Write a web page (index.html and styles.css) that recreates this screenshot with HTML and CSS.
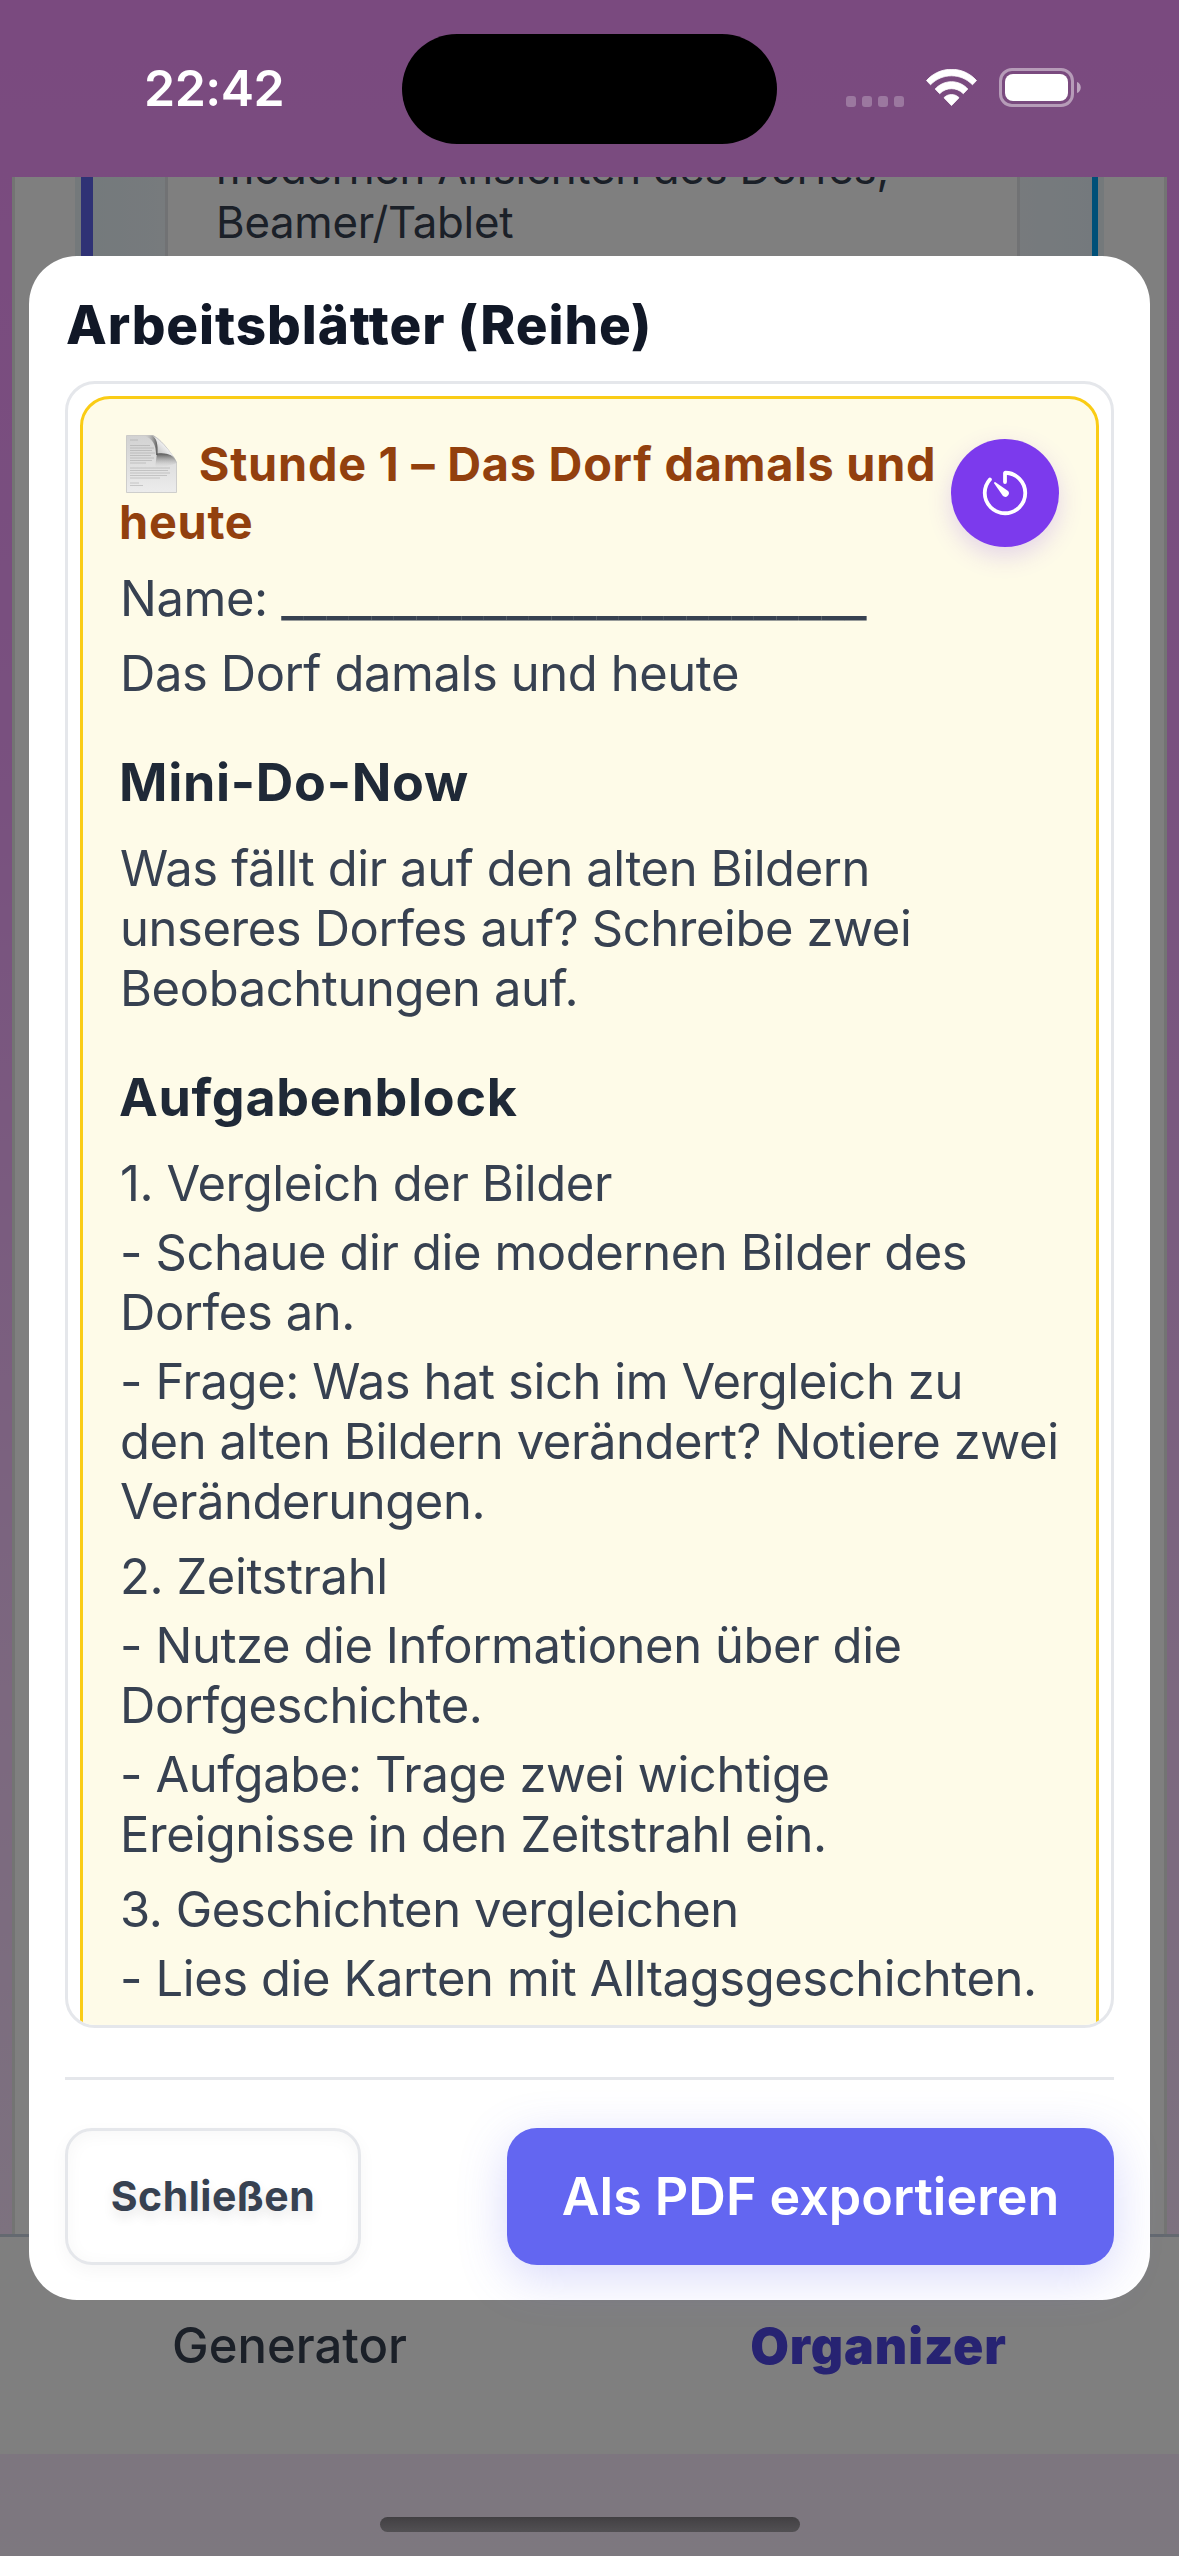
FILE: index.html
```html
<!DOCTYPE html>
<html lang="de">
<head>
<meta charset="utf-8">
<title>Arbeitsblätter (Reihe)</title>
<link rel="stylesheet" href="styles.css">
</head>
<body>
<div class="screen">
  <div class="app">
    <div class="status-space"></div>
    <div class="page">
      <div class="lesson">
        <div class="lesson-card">
          <p class="lesson-text">modernen Ansichten des Dorfes,<br>Beamer/Tablet</p>
        </div>
      </div>
    </div>
    <nav class="tabs">
      <a class="tab">Generator</a>
      <a class="tab tab-active">Organizer</a>
    </nav>
    <div class="home-space"></div>
  </div>

  <div class="overlay">
    <section class="dialog">
      <h1 class="dialog-title">Arbeitsblätter (Reihe)</h1>
      <div class="scroller">
        <article class="sheet">
          <header class="sheet-head">
            <h2 class="sheet-title"><svg class="page-icon" viewBox="0 0 66 58">
              <defs>
                <linearGradient id="paper" x1="0" y1="0" x2="0" y2="1"><stop offset="0" stop-color="#d2d2d2"/><stop offset="1" stop-color="#ececec"/></linearGradient>
                <linearGradient id="fold" x1="0" y1="1" x2="1" y2="0"><stop offset="0.2" stop-color="#b9b9b9"/><stop offset="0.6" stop-color="#f4f4f4"/></linearGradient>
                <linearGradient id="shadeV" x1="0" y1="0" x2="0" y2="1"><stop offset="0" stop-color="#4c4c4c"/><stop offset="1" stop-color="#d8d8d8" stop-opacity="0"/></linearGradient>
                <linearGradient id="shadeH" x1="1" y1="0" x2="0" y2="0"><stop offset="0" stop-color="#4c4c4c"/><stop offset="1" stop-color="#d8d8d8" stop-opacity="0"/></linearGradient>
              </defs>
              <path d="M7.500 0.500H34C40 3 50 14 57.500 27V57.500H7.500z" fill="url(#paper)" stroke="#c4c4c4" stroke-width="0.800"/>
              <path d="M24 0.500H34C38 3 40 9 39 20H37C37 10 34 3 24 0.500z" fill="url(#shadeH)"/>
              <path d="M38 18C48 17 56 19 57.500 28C52 31 43 31 36 33z" fill="url(#shadeV)"/>
              <path d="M33 0.500C38 3 39 10 38.500 18.500C48 17.500 55 20 57.500 27C57 23 41 4 33 0.500z" fill="url(#fold)"/>
              <path d="M11 5h8M11 10.500h20M11 13h24M11 15.500h22M11 18h25M11 20.500h21M11 23h24M11 25.500h22M11 28h16M11 33h40M11 35.500h38M11 38h40M11 40.500h37M11 43h30M11 48h9M11 50.500h13" stroke="#9c9c9c" stroke-width="0.900" opacity="0.500"/>
            </svg> Stunde 1 – Das Dorf damals und heute</h2>
            <button class="timer" aria-label="Timer">
              <svg class="timer-icon" viewBox="0 0 512 512">
                <path d="M112.910 128A191.850 191.850 0 0 0 64 254c-1.180 106.350 85.650 193.800 192 194 106.200.200 192-85.830 192-192 0-104.540-83.550-189.610-187.500-192a4.360 4.360 0 0 0-4.500 4.370V152" fill="none" stroke="#fff" stroke-width="36" stroke-linecap="round" stroke-linejoin="round"/>
                <path d="M233.380 278.630l-79-113a8.130 8.130 0 0 1 11.320-11.320l113 79a32.500 32.500 0 0 1-37.250 53.260 33.210 33.210 0 0 1-8.070-7.940z" fill="#fff"/>
              </svg>
            </button>
          </header>
          <p class="line">Name: <span class="blank">__________________________</span></p>
          <p class="line">Das Dorf damals und heute</p>
          <h3 class="section">Mini-Do-Now</h3>
          <p class="line">Was fällt dir auf den alten Bildern unseres Dorfes auf? Schreibe zwei Beobachtungen auf.</p>
          <h3 class="section">Aufgabenblock</h3>
          <div class="task">
            <p>1. Vergleich der Bilder</p>
            <p>- Schaue dir die modernen Bilder des Dorfes an.</p>
            <p>- Frage: Was hat sich im Vergleich zu<br>den alten Bildern verändert? Notiere zwei Veränderungen.</p>
          </div>
          <div class="task">
            <p>2. Zeitstrahl</p>
            <p>- Nutze die Informationen über die Dorfgeschichte.</p>
            <p>- Aufgabe: Trage zwei wichtige Ereignisse in den Zeitstrahl ein.</p>
          </div>
          <div class="task">
            <p>3. Geschichten vergleichen</p>
            <p>- Lies die Karten mit Alltagsgeschichten.</p>
          </div>
        </article>
      </div>
      <footer class="actions">
        <button class="btn btn-close">Schließen</button>
        <button class="btn btn-export">Als PDF exportieren</button>
      </footer>
    </section>
  </div>

  <div class="status">
    <span class="clock">22:42</span>
    <span class="island"></span>
    <span class="indicators">
      <span class="dots"><i></i><i></i><i></i><i></i></span>
      <svg class="wifi" viewBox="0 0 51 37">
        <path d="M0.500 11.500C14-3.500 37-3.500 50.500 11.500L46.500 15.800C35 3.800 16 3.800 4.500 15.800z" fill="#fff" stroke="#fff" stroke-width="0.800" stroke-linejoin="round"/>
        <path d="M9.200 20C18 10.300 33 10.300 41.800 20L37.300 24.700C31 18 20 18 13.700 24.700z" fill="#fff" stroke="#fff" stroke-width="0.800" stroke-linejoin="round"/>
        <path d="M18 28.800C22 24.400 29 24.400 33 28.800L25.500 36.600z" fill="#fff" stroke="#fff" stroke-width="0.800" stroke-linejoin="round"/>
      </svg>
      <svg class="battery" viewBox="0 0 82 39">
        <rect x="1.500" y="1.500" width="72" height="36" rx="11.500" fill="none" stroke="#fff" stroke-opacity="0.450" stroke-width="3"/>
        <rect x="6" y="6" width="63" height="27" rx="8" fill="#fff"/>
        <path d="M78 14C83 15.500 83 23.500 78 25z" fill="#fff" fill-opacity="0.500"/>
      </svg>
    </span>
  </div>
  <div class="home-bar"></div>
</div>
</body>
</html>
```
FILE: styles.css
```css
* { box-sizing: border-box; }
body, h1, h2, h3, p { margin: 0; }
body { font-family: Inter, "Liberation Sans", sans-serif; }
button { font: inherit; border: 0; padding: 0; }

.screen { position: relative; width: 1179px; height: 2556px; overflow: hidden; }

/* underlying app */
.app {
  height: 100%;
  display: flex;
  flex-direction: column;
  background: linear-gradient(180deg, #f594ff 0%, #f2a2ff 31%, #f8d0ff 66%, #fbf0ff 100%);
}
.status-space { height: 177px; }
.page {
  flex: 1;
  margin: 0 12px;
  padding: 0 60px;
  background: #fff;
  border: solid #e6e8e6;
  border-width: 0 3px;
  overflow: hidden;
}
.lesson {
  height: 100%;
  padding: 0 72px;
  border: solid;
  border-color: transparent #00a0f0 transparent #5f64ea;
  border-width: 0 6px 0 12px;
  background: linear-gradient(90deg, #e9f4f9, #f2f7fb 12%, #f2f7fb 88%, #e9f3fb);
  box-shadow: 0 0 0 6px #e9f2f6;
  margin: 0 0 0 6px;
  width: 1017px;
}
.lesson-card { height: 100%; padding: 0 48px; background: #fff; border: solid #e2e4e8; border-width: 0 3px; }
.lesson-text { margin-top: -35px; font-size: 43.8px; line-height: 54px; letter-spacing: -.28px; color: #374151; white-space: nowrap; }
.tabs { height: 220px; padding: 79px 11px 0 0; display: flex; background: #fff; border-top: 3px solid #c8d2e0; }
.tab { flex: 1; padding-right: 7px; text-align: center; font-size: 49px; line-height: 60px; font-weight: 500; color: #374151; }
.tab-active { padding: 0 0 0 3px; font-size: 50px; font-weight: 900; letter-spacing: .9px; color: #4f46e5; }
.home-space { height: 102px; }

/* dialog */
.overlay {
  position: absolute;
  inset: 0;
  background: rgba(0, 0, 0, .5);
  display: flex;
  align-items: center;
  justify-content: center;
}
.dialog {
  width: 1121px;
  height: 2044px;
  padding: 36px 36px 35px;
  display: flex;
  flex-direction: column;
  background: #fff;
  border-radius: 48px;
}
.dialog-title { padding-left: 1px; font-size: 53px; line-height: 66px; font-weight: 800; letter-spacing: .9px; color: #111827; margin-bottom: 23px; white-space: nowrap; }
.scroller { flex: 1; min-height: 0; overflow: hidden; padding: 12px; border: 3px solid #e5e7eb; border-radius: 30px; }
.sheet { height: 1760px; padding: 36px; background: #fefbe8; border: 3px solid #facc15; border-radius: 30px; color: #374151; }
.sheet-head { display: flex; align-items: flex-start; margin-bottom: 18px; }
.sheet-title { flex: 1; font-size: 46.8px; line-height: 58px; font-weight: 700; letter-spacing: .75px; color: #92400e; }
.page-icon { width: 66px; height: 58px; margin-right: 2px; vertical-align: -12px; }
.timer {
  width: 108px;
  height: 108px;
  margin: 4px 1px 0 0;
  border-radius: 50%;
  background: #7c3aed;
  display: flex;
  align-items: center;
  justify-content: center;
  box-shadow: 0 9px 24px rgba(124, 58, 237, .2);
}
.timer-icon { width: 54px; height: 54px; }
.line, .task p { padding-left: 1px; margin-right: -4px; font-size: 48.9px; line-height: 60px; letter-spacing: -.39px; }
.line + .line { margin-top: 15px; }
.blank { font-weight: 500; letter-spacing: -.12px; }
.section { margin: 47px 0 24px; font-size: 52px; line-height: 64px; font-weight: 700; letter-spacing: .7px; color: #1f2937; }
.task + .task { margin-top: 15px; }
.task p + p { margin-top: 9px; }

.actions { display: flex; justify-content: space-between; margin-top: 49px; padding-top: 48px; border-top: 3px solid #e5e7eb; }
.btn { height: 137px; white-space: nowrap; }
.btn-close {
  width: 296px;
  border: 3px solid #e5e7eb;
  border-radius: 27px;
  background: #fff;
  color: #374151;
  font-size: 41px;
  font-weight: 700;
  letter-spacing: .5px;
  padding-bottom: 2px;
  box-shadow: 0 6px 18px rgba(0, 0, 0, .04), inset 0 3px 18px rgba(0, 0, 0, .04);
  text-shadow: 0 6px 12px rgba(0, 0, 0, .1);
}
.btn-export {
  width: 607px;
  border-radius: 30px;
  background: #6366f1;
  color: #fff;
  font-size: 52px;
  font-weight: 600;
  box-shadow: 0 12px 48px rgba(99, 102, 241, .25);
}

/* system chrome */
.status {
  position: absolute;
  top: 0;
  left: 0;
  width: 100%;
  height: 177px;
  display: grid;
  grid-template-columns: 402px 375px 1fr;
}
.clock { padding: 58px 0 0 144px; font-size: 50px; line-height: 60px; font-weight: 600; letter-spacing: -.5px; color: #fff; }
.island { margin-top: 34px; height: 110px; border-radius: 55px; background: #000; }
.indicators { display: flex; align-items: flex-start; padding: 68px 0 0 69px; }
.dots { display: flex; gap: 6px; margin-top: 28px; }
.dots i { width: 10px; height: 11px; border-radius: 3px; background: rgba(255, 255, 255, .25); }
.wifi { width: 51px; height: 37px; margin: 1px 22px 0; }
.battery { width: 82px; height: 39px; }
.home-bar { position: absolute; left: 380px; top: 2517px; width: 420px; height: 15px; border-radius: 8px; background: linear-gradient(#424043, #525053); }
```
